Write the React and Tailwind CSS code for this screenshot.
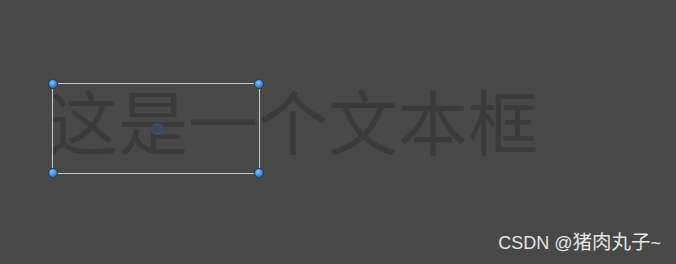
export default function App() {
  const handle =
    "absolute w-[10px] h-[10px] rounded-full border border-[#1d3f66] bg-[radial-gradient(circle_at_40%_35%,#8cc3f5,#3f86d1_55%,#24578f)]";

  return (
    <div className="w-[676px] h-[264px] bg-[#484848] flex flex-col overflow-hidden font-['Noto_Sans_CJK_SC',sans-serif]">
      <div className="relative pl-[48px] pt-[80px]">
        <div className="text-[70px] leading-[80px] text-[#3a3a3a] blur-[0.7px] whitespace-nowrap">
          这是一个文本框
        </div>

        {/* selection overlay */}
        <div className="absolute left-[52px] top-[83px] w-[208px] h-[91px] border border-[#c9c9c9]">
          <span className={`${handle} -left-[5px] -top-[5px]`} />
          <span className={`${handle} -right-[5px] -top-[5px]`} />
          <span className={`${handle} -left-[5px] -bottom-[5px]`} />
          <span className={`${handle} -right-[5px] -bottom-[5px]`} />
          <span className="absolute left-[98px] top-[39px] w-[12px] h-[12px] rounded-full border-2 border-[#33507a] bg-[#404850]" />
        </div>
      </div>

      <div className="mt-auto self-end pr-[15px] pb-[10px] text-[18px] leading-[22px] text-[#e4e4e4] whitespace-nowrap font-['Liberation_Sans','Noto_Sans_CJK_SC',sans-serif]">
        CSDN @<span className="text-[19.5px]">猪肉丸子</span>~
      </div>
    </div>
  );
}
